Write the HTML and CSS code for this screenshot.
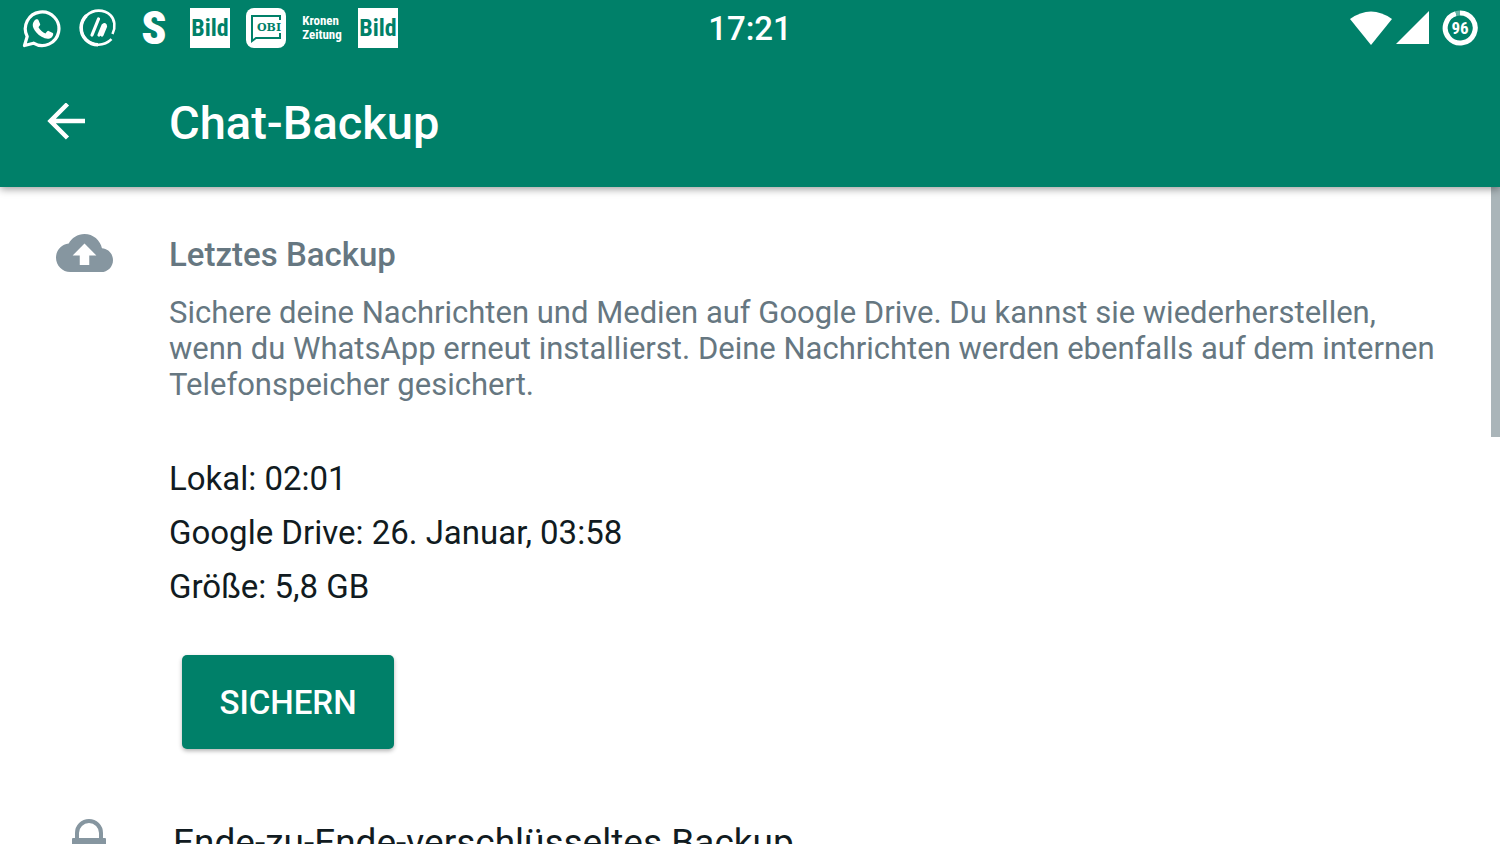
FILE: index.html
```
<!DOCTYPE html>
<html lang="de">

<head>
    <meta charset="UTF-8">
    <meta name="viewport" content="width=device-width, initial-scale=1.0">
    <title>Chat-Backup</title>
    <link rel="stylesheet" href="styles.css">
</head>

<body>
    <header class="header">
        <div class="status">
            <div class="notes">
                <svg class="note" viewBox="0 0 40 40">
                    <path d="M2.500 37.500L5.200 28.500A16.800 16.800 0 1 1 11.500 35.200Z" fill="none" stroke="#fff" stroke-width="3.200" stroke-linejoin="round" />
                    <path d="M12.500 12.500c1.500-2 3.500-1.500 4-.3l1.700 4c.3.900-1.300 2.300-1.700 3 1.500 3 4.200 5.200 7 6.200.900-.7 2-2.800 3-2.500l4.300 2.100c1 .6.200 3.300-1.200 4.400-2.600 2-6.200 1.500-10-.6-4-2.200-6.600-5.500-8.200-8.800-1.200-2.600-.7-5.500 1.100-7.500z" fill="#fff" />
                </svg>
                <svg class="note" viewBox="0 0 40 40">
                    <path d="M34.500 26C38 19 36.500 11 32.500 7.200 26 1.200 15.500 1 8.500 7.500 1.500 14.200 1.400 25 8 31.700c6.800 6.500 18 7 25.500-.5" fill="none" stroke="#fff" stroke-width="2.600" />
                    <path d="M8.500 7.500C1.500 14.200 1.400 25 8 31.700c4 4 8.500 5 12 5" fill="none" stroke="#fff" stroke-width="3.600" />
                    <path d="M20.500 11L14 27M21 27l4-9.500q2.500-2 2.500 1L24 27" fill="none" stroke="#fff" stroke-width="3.200" stroke-linecap="round" />
                </svg>
                <span class="note note-s">S</span>
                <span class="note note-bild">Bild</span>
                <svg class="note" viewBox="0 0 40 40">
                    <rect width="40" height="40" rx="8" fill="#fff" />
                    <path d="M34 12V8H6V33l4-3h24v-5" fill="none" stroke="#008069" stroke-width="2" />
                    <text x="11" y="23" class="note-obi">OBI</text>
                </svg>
                <span class="note note-krone">Kronen<br>Zeitung</span>
                <span class="note note-bild">Bild</span>
            </div>
            <time class="clock">17:21</time>
            <div class="signals">
                <svg width="42" height="36" viewBox="0 0 42 36">
                    <path d="M0 9Q21-6 42 9L21 35z" fill="#fff" />
                </svg>
                <svg width="34" height="36" viewBox="0 0 34 36">
                    <path d="M33 1V34H0z" fill="#fff" />
                </svg>
                <svg class="charge" width="36" height="36" viewBox="0 0 36 36">
                    <path d="M18 3a15 15 0 1 1-4 .6" fill="none" stroke="#fff" stroke-width="5" />
                    <path d="M14 3.600A15 15 0 0 1 18 3" fill="none" stroke="#66b3a5" stroke-width="5" />
                    <text x="18" y="24" class="battery">96</text>
                </svg>
            </div>
        </div>
        <div class="toolbar">
            <a class="back" href="#" aria-label="Zurück">
                <svg width="40" height="40" viewBox="0 0 40 40">
                    <path d="M39 18H4M21.500 1L4.500 18l17 17" fill="none" stroke="#fff" stroke-width="4.500" />
                </svg>
            </a>
            <h1>Chat-Backup</h1>
        </div>
    </header>
    <main class="content">
        <section class="row">
            <svg class="icon" width="57" height="40" viewBox="0 4 24 16">
                <path d="M19.350 10.040C18.670 6.590 15.640 4 12 4 9.110 4 6.600 5.640 5.350 8.040 2.340 8.360 0 10.910 0 14c0 3.310 2.690 6 6 6h13c2.760 0 5-2.240 5-5 0-2.640-2.050-4.780-4.650-4.960zM14 13v4h-4v-4H7l5-5 5 5h-3z" fill="#8696a0" />
            </svg>
            <div class="text">
                <h2>Letztes Backup</h2>
                <p class="info">Sichere deine Nachrichten und Medien auf Google Drive. Du kannst sie wiederherstellen, wenn du WhatsApp erneut installierst. Deine Nachrichten werden ebenfalls auf dem internen Telefonspeicher gesichert.</p>
                <ul class="details">
                    <li>Lokal: 02:01</li>
                    <li>Google Drive: 26. Januar, 03:58</li>
                    <li>Größe: 5,8 GB</li>
                </ul>
                <button class="save" type="button">SICHERN</button>
            </div>
        </section>
        <section class="row encrypted">
            <svg class="icon lock" width="36" height="48" viewBox="0 0 36 48">
                <path d="M6 22V14a12 12 0 0 1 24 0v8" fill="none" stroke="#8696a0" stroke-width="4" />
                <rect x="1" y="19" width="34" height="28" rx="1" fill="#8696a0" />
            </svg>
            <h3>Ende-zu-Ende-verschlüsseltes Backup</h3>
        </section>
        <span class="scrollbar"></span>
    </main>
</body>

</html>
```
FILE: styles.css
```
* {
    margin: 0;
    padding: 0;
    box-sizing: border-box;
}

body {
    display: flex;
    flex-direction: column;
    height: 100vh;
    overflow: hidden;
    background: #fff;
    color: #111b21;
    font-family: Roboto, "Liberation Sans", sans-serif;
}

svg {
    display: block;
    flex: none;
}

.header {
    position: relative;
    z-index: 1;
    flex: none;
    background: #008069;
    color: #fff;
    box-shadow: 0 2px 8px rgba(0, 0, 0, 0.4);
}

.status {
    display: grid;
    grid-template-columns: 1fr auto 1fr;
    align-items: center;
    height: 56px;
    padding: 0 22px;
}

.notes {
    display: flex;
    gap: 16px;
}

.note {
    display: flex;
    align-items: center;
    justify-content: center;
    width: 40px;
    height: 40px;
    font-family: "Roboto Condensed", Roboto, sans-serif;
    font-weight: bold;
}

.note-s {
    font-size: 46px;
    font-weight: 900;
}

.note-bild {
    background: #fff;
    color: #008069;
    font-size: 24px;
}

.note-krone {
    font-size: 13px;
    line-height: 14px;
}

.note-obi {
    fill: #008069;
    font: bold 11px "DejaVu Serif", serif;
}

.clock {
    font-size: 33px;
    font-weight: 500;
}

.signals {
    display: flex;
    justify-content: flex-end;
    align-items: center;
    gap: 4px;
}

.charge {
    margin-left: 8px;
}

.battery {
    fill: #fff;
    font: bold 17px "Roboto Condensed", Roboto, sans-serif;
    text-anchor: middle;
}

.toolbar {
    display: flex;
    align-items: center;
    height: 131px;
    padding: 2px 46px 0;
}

.back {
    width: 123px;
}

h1 {
    font-size: 47px;
    font-weight: 500;
}

.content {
    position: relative;
    flex: 1;
    overflow: hidden;
}

.row {
    display: flex;
    padding: 46px 60px 0 56px;
}

.icon {
    margin-right: 56px;
}

.text {
    flex: 1;
}

h2 {
    color: #667781;
    font-size: 33px;
    font-weight: 500;
    line-height: 44px;
}

.info {
    margin-top: 18px;
    color: #667781;
    font-size: 31px;
    line-height: 36px;
}

.details {
    margin-top: 49px;
    font-size: 33px;
    line-height: 54px;
    list-style: none;
}

.save {
    width: 212px;
    height: 94px;
    margin: 41px 0 0 13px;
    border: none;
    border-radius: 5px;
    background: #008069;
    color: #fff;
    font-family: inherit;
    font-size: 33px;
    font-weight: 500;
    box-shadow: 0 2px 4px rgba(0, 0, 0, 0.3);
}

.encrypted {
    padding: 70px 60px 0 71px;
}

.lock {
    margin-right: 66px;
}

h3 {
    font-size: 37px;
    font-weight: 400;
    line-height: 48px;
}

.scrollbar {
    position: absolute;
    top: 0;
    right: 0;
    width: 9px;
    height: 250px;
    background: #aab5b9;
}
```
